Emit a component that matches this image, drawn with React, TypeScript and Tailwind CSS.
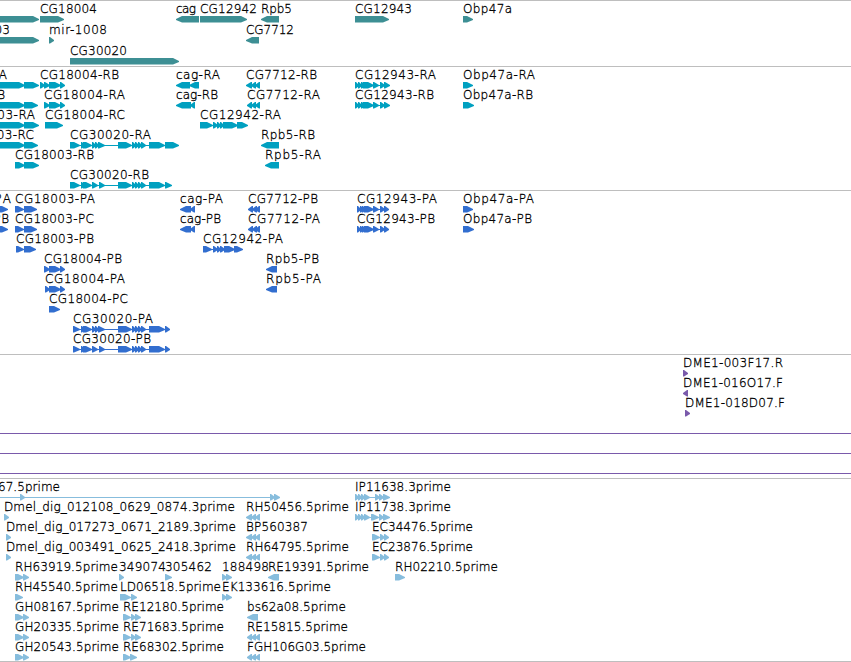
import React from "react";

type Strand = "+" | "-";
type Exon = [number, number];

interface Feature {
  name?: string;
  x: number;
  width?: number;
  strand?: Strand;
  exons: Exon[];
}

interface TrackData {
  id: string;
  color: string;
  rowClass: string;
  className: string;
  rows: Feature[][];
}

const f = (name: string, x: number, width: number, exons: Exon[], strand: Strand = "+"): Feature => ({
  name,
  x,
  width,
  exons,
  strand,
});

const CG7712: Exon[] = [[248, 253], [252, 257], [255, 260]];
const EST_MINUS: Exon[] = [[246, 252], [251, 256], [255, 260]];
const CG12943_R: Exon[] = [[355, 359], [358, 362], [361, 366], [363, 374], [373, 379], [380, 385], [384, 390]];
const CG12943_P: Exon[] = [[357, 361], [360, 364], [362, 366], [364, 374], [373, 379], [380, 385], [384, 389]];
const CG18004_A: Exon[] = [[44, 50], [49, 61], [60, 65]];
const CG30020_TAIL: Exon[] = [[118, 132], [132, 136], [135, 139], [138, 142], [141, 146]];
const WHOLE_VIEW: Feature[] = [{ x: -10, exons: [[-10, -5], [870, 880]] }];

const tracks: TrackData[] = [
  {
    id: "gene",
    color: "#3d8f94",
    rowClass: "block h-[21px] w-full",
    className: "pb-[2px]",
    rows: [
      [
        { x: -20, exons: [[-20, 39]] },
        f("CG18004", 40, 57, [[40, 64]]),
        f("cag", 176, 20, [[176, 199]], "-"),
        f("CG12942", 200, 57, [[200, 247]]),
        f("Rpb5", 261, 31, [[261, 279]], "-"),
        f("CG12943", 355, 57, [[355, 389]]),
        f("Obp47a", 463, 49, [[463, 473]]),
      ],
      [
        f("CG18003", -47, 57, [[-47, 39]]),
        f("mir-1008", 49, 58, [[49, 54]]),
        f("CG7712", 246, 48, [[246, 259]], "-"),
      ],
      [f("CG30020", 70, 57, [[70, 179]])],
    ],
  },
  {
    id: "transcript",
    color: "#00a0c0",
    rowClass: "block h-5 w-full",
    className: "pb-[3px]",
    rows: [
      [
        f("-RA", -16, 23, [[-16, 25], [24, 39]]),
        f("CG18004-RB", 40, 79, [[40, 45], [44, 50], [49, 61], [60, 65]]),
        f("cag-RA", 176, 44, [[176, 190], [189, 199]], "-"),
        f("CG7712-RB", 246, 71, EST_MINUS, "-"),
        f("CG12943-RA", 355, 81, CG12943_R),
        f("Obp47a-RA", 463, 72, [[463, 473]]),
      ],
      [
        f("-RB", -16, 21, [[-16, 25], [24, 38]]),
        f("CG18004-RA", 44, 81, CG18004_A),
        f("cag-RB", 176, 42, [[176, 191], [190, 195]], "-"),
        f("CG7712-RA", 247, 73, [[247, 252], [251, 256], [255, 260]], "-"),
        f("CG12943-RB", 355, 79, CG12943_R),
        f("Obp47a-RB", 463, 70, [[463, 474]]),
      ],
      [
        f("CG18003-RA", -46, 81, [[-46, 25], [24, 39]]),
        f("CG18004-RC", 45, 80, [[45, 63]]),
        f("CG12942-RA", 200, 81, [[200, 213], [213, 218], [217, 221], [220, 224], [223, 238], [237, 248]]),
      ],
      [
        f("CG18003-RC", -46, 80, [[-46, 25], [24, 38]]),
        f("CG30020-RA", 70, 81, [[70, 80], [81, 85], [83, 92], [92, 96], [95, 99], [98, 105], ...CG30020_TAIL, [149, 165], [165, 179]]),
        f("Rpb5-RB", 261, 54, [[261, 279]], "-"),
      ],
      [f("CG18003-RB", 15, 79, [[15, 25], [24, 39]]), f("Rpb5-RA", 265, 56, [[265, 279]], "-")],
      [f("CG30020-RB", 70, 79, [[70, 80], [81, 85], [83, 92], [92, 98], [99, 105], ...CG30020_TAIL, [149, 165], [165, 172]])],
    ],
  },
  {
    id: "cds",
    color: "#326ecf",
    rowClass: "block h-5 w-full",
    className: "pb-[3px]",
    rows: [
      [
        f("-PA", -12, 23, [[-12, 8]]),
        f("CG18003-PA", 15, 80, [[15, 24], [24, 37]]),
        f("cag-PA", 180, 43, [[180, 191], [190, 195]], "-"),
        f("CG7712-PB", 248, 70, CG7712, "-"),
        f("CG12943-PA", 357, 80, CG12943_P),
        f("Obp47a-PA", 463, 71, [[463, 473]]),
      ],
      [
        f("-PB", -12, 21, [[-12, 8]]),
        f("CG18003-PC", 15, 79, [[15, 24], [24, 37]]),
        f("cag-PB", 180, 41, [[180, 191], [190, 195]], "-"),
        f("CG7712-PA", 248, 72, CG7712, "-"),
        f("CG12943-PB", 357, 78, CG12943_P),
        f("Obp47a-PB", 463, 69, [[463, 474]]),
      ],
      [
        f("CG18003-PB", 16, 78, [[16, 24], [24, 36]]),
        f("CG12942-PA", 203, 80, [[203, 212], [213, 218], [217, 221], [220, 225], [224, 235], [234, 243]]),
      ],
      [f("CG18004-PB", 44, 78, CG18004_A), f("Rpb5-PB", 266, 53, [[266, 277]], "-")],
      [f("CG18004-PA", 45, 80, [[45, 50], [49, 61], [60, 65]]), f("Rpb5-PA", 266, 55, [[266, 277]], "-")],
      [f("CG18004-PC", 49, 79, [[49, 60]])],
      [f("CG30020-PA", 73, 80, [[73, 80], [81, 85], [83, 92], [92, 96], [95, 99], [98, 105], ...CG30020_TAIL, [149, 165], [165, 170]])],
      [f("CG30020-PB", 73, 78, [[73, 80], [81, 85], [83, 92], [92, 98], [99, 105], ...CG30020_TAIL, [149, 165], [165, 170]])],
    ],
  },
  {
    id: "bac",
    color: "#7a5aab",
    rowClass: "block h-5 w-full",
    className: "pb-[3px]",
    rows: [
      [f("DME1-003F17.R", 683, 100, [[683, 688]])],
      [f("DME1-016O17.F", 683, 100, [[683, 688]], "-")],
      [f("DME1-018D07.F", 685, 100, [[685, 690]])],
      WHOLE_VIEW,
      WHOLE_VIEW,
      WHOLE_VIEW,
    ],
  },
  {
    id: "est",
    color: "#87bddd",
    rowClass: "block h-5 w-full",
    className: "border-b pb-[2px]",
    rows: [
      [
        f("67.5prime", -2, 62, [[-10, -5], [20, 25], [270, 275], [274, 280]]),
        f("IP11638.3prime", 355, 96, [[355, 359], [358, 362], [361, 365], [364, 370], [375, 380], [379, 384], [383, 390]]),
      ],
      [
        f("Dmel_dig_012108_0629_0874.3prime", 4, 231, [[4, 9]]),
        f("RH50456.5prime", 246, 103, EST_MINUS, "-"),
        f("IP11738.3prime", 355, 96, [[355, 359], [358, 362], [361, 365], [364, 370], [371, 379], [379, 384], [383, 390]]),
      ],
      [
        f("Dmel_dig_017273_0671_2189.3prime", 6, 230, [[6, 11]]),
        f("BP560387", 246, 62, EST_MINUS, "-"),
        f("EC34476.5prime", 372, 101, [[372, 380], [380, 385], [384, 389]]),
      ],
      [
        f("Dmel_dig_003491_0625_2418.3prime", 6, 230, [[6, 11]]),
        f("RH64795.5prime", 246, 103, EST_MINUS, "-"),
        f("EC23876.5prime", 372, 101, [[372, 380], [380, 385], [384, 389]]),
      ],
      [
        f("RH63919.5prime", 15, 103, [[15, 24], [23, 29]]),
        f("349074", 119, 47, [[119, 124]]),
        f("305462", 165, 47, [[165, 172]]),
        f("188498", 222, 47, [[222, 227], [226, 232]]),
        f("RE19391.5prime", 268, 101, [[268, 279]], "-"),
        f("RH02210.5prime", 395, 103, [[395, 405]]),
      ],
      [
        f("RH45540.5prime", 15, 103, [[15, 23]]),
        f("LD06518.5prime", 120, 101, [[120, 131], [131, 137]]),
        f("EK133616.5prime", 222, 109, [[222, 227], [226, 232]]),
      ],
      [
        f("GH08167.5prime", 15, 104, [[15, 24], [23, 29]]),
        f("RE12180.5prime", 123, 101, [[123, 131], [131, 136], [135, 141]]),
        f("bs62a08.5prime", 247, 99, [[247, 258]], "-"),
      ],
      [
        f("GH20335.5prime", 15, 104, [[15, 24], [23, 29]]),
        f("RE71683.5prime", 123, 101, [[123, 131], [131, 136], [135, 141]]),
        f("RE15815.5prime", 247, 101, [[247, 252], [251, 256], [255, 260]], "-"),
      ],
      [
        f("GH20543.5prime", 15, 104, [[15, 24], [23, 29]]),
        f("RE68302.5prime", 123, 101, [[123, 131], [130, 137]]),
        f("FGH106G03.5prime", 247, 119, [[247, 252], [251, 256], [255, 260]], "-"),
      ],
    ],
  },
];

// exon box that tapers to a blunt tip in the direction of the strand
function exonPoints([start, end]: Exon, strand: Strand) {
  const head = Math.min(end - start - 1, 6);
  if (strand === "+") {
    return `${start},15 ${end - head},15 ${end},18 ${end},19 ${end - head},21.5 ${start},21.5`;
  }
  return `${end},15 ${start + head},15 ${start},18 ${start},19 ${start + head},21.5 ${end},21.5`;
}

function Glyph({ feature, color }: { feature: Feature; color: string }) {
  const { name, x, width, exons, strand = "+" } = feature;
  const start = exons[0][0];
  const end = exons[exons.length - 1][1];

  return (
    <g>
      {exons.length > 1 && (
        <rect x={start + 2} y={18} width={end - start - 4} height={1} fill={color} shapeRendering="crispEdges" />
      )}
      {exons.map((exon, i) => (
        <polygon key={i} points={exonPoints(exon, strand)} fill={color} />
      ))}
      {name && (
        <text x={x} y={12} textLength={width} className="fill-black stroke-black stroke-[0.3px]">
          {name}
        </text>
      )}
    </g>
  );
}

function Track({ track }: { track: TrackData }) {
  return (
    <section className={`border-t border-[#bebebe] ${track.className}`}>
      {track.rows.map((row, i) => (
        <svg key={i} className={`${track.rowClass} overflow-visible`}>
          {row.map((feature, j) => (
            <Glyph key={j} feature={feature} color={track.color} />
          ))}
        </svg>
      ))}
    </section>
  );
}

export default function App() {
  return (
    <main className="w-full overflow-hidden bg-white font-['DejaVu_Sans',sans-serif] text-[12px] font-extralight">
      {tracks.map((track) => (
        <Track key={track.id} track={track} />
      ))}
    </main>
  );
}
